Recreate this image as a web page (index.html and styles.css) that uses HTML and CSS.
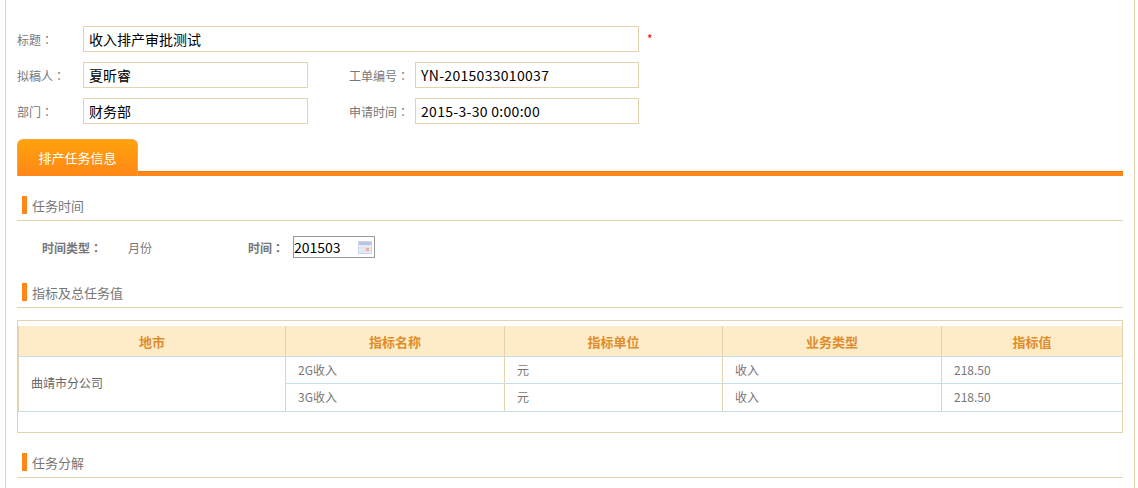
FILE: index.html
```html
<!DOCTYPE html>
<html lang="en">
<head>
    <meta charset="UTF-8">
    <title>收入排产审批测试</title>
    <link rel="stylesheet" href="styles.css">
</head>
<body>

<div class="page">
    <div class="form-row">
        <label class="form-label">标题<span class="colon">：</span></label>
        <div class="form-input wide">收入排产审批测试</div>
        <span class="required">*</span>
    </div>
    <div class="form-row">
        <label class="form-label">拟稿人<span class="colon">：</span></label>
        <div class="form-input">夏昕睿</div>
        <label class="form-label second">工单编号<span class="colon">：</span></label>
        <div class="form-input latin">YN-2015033010037</div>
    </div>
    <div class="form-row">
        <label class="form-label">部门<span class="colon">：</span></label>
        <div class="form-input">财务部</div>
        <label class="form-label second">申请时间<span class="colon">：</span></label>
        <div class="form-input latin">2015-3-30 0:00:00</div>
    </div>

    <div class="tab-bar">
        <div class="tab">排产任务信息</div>
    </div>

    <div class="section-title"><i></i>任务时间</div>
    <div class="time-row">
        <b class="time-type-label">时间类型<span class="colon">：</span></b>
        <span class="time-type-value">月份</span>
        <b class="time-label">时间<span class="colon">：</span></b>
        <div class="date-input">
            201503
            <svg class="cal-icon" width="14" height="13" viewBox="0 0 14 13">
                <rect x="0.5" y="0.5" width="13" height="12" fill="#eef1f9" stroke="#ccd5e8"/>
                <rect x="1" y="1" width="12" height="3" fill="#b7c4e2"/>
                <path d="M1 7h12M1 10h12M4 4v8M7 4v8M10 4v8" stroke="#d6ddec" fill="none"/>
                <rect x="8" y="7" width="3" height="3" fill="#f2ad9c"/>
            </svg>
        </div>
    </div>

    <div class="section-title"><i></i>指标及总任务值</div>
    <div class="table-box">
        <table class="data-table">
            <colgroup>
                <col class="col-city">
                <col class="col-name">
                <col class="col-unit">
                <col class="col-type">
                <col>
            </colgroup>
            <thead>
                <tr>
                    <th>地市</th>
                    <th>指标名称</th>
                    <th>指标单位</th>
                    <th>业务类型</th>
                    <th>指标值</th>
                </tr>
            </thead>
            <tbody>
                <tr class="row-a">
                    <td class="city" rowspan="2">曲靖市分公司</td>
                    <td>2G收入</td>
                    <td>元</td>
                    <td>收入</td>
                    <td>218.50</td>
                </tr>
                <tr class="row-b">
                    <td>3G收入</td>
                    <td>元</td>
                    <td>收入</td>
                    <td>218.50</td>
                </tr>
            </tbody>
        </table>
    </div>

    <div class="section-title"><i></i>任务分解</div>
</div>

</body>
</html>
```

FILE: styles.css
```css
html, body {
    margin: 0;
    padding: 0;
    background: #fff;
}
body {
    font-family: "Noto Sans CJK SC", "Noto Sans", sans-serif;
    font-size: 12px;
    color: #777;
    overflow: hidden;
}
.page {
    box-sizing: border-box;
    width: 1130px;
    height: 488px;
    margin-left: 5px;
    padding: 26px 11px 0 11px;
    border-left: 1px solid #e5d3b0;
    border-right: 1px solid #e5d3b0;
    overflow: hidden;
}
.colon {
    font-family: "Noto Sans CJK TC", sans-serif;
}
.form-row {
    display: flex;
    align-items: center;
    height: 26px;
    margin-bottom: 10px;
}
.form-label {
    width: 66px;
    white-space: nowrap;
}
.form-label.second {
    margin-left: 41px;
}
.form-input {
    box-sizing: border-box;
    width: 225px;
    height: 26px;
    line-height: 24px;
    padding-left: 5px;
    border: 1px solid #e5d3b0;
    font-size: 14px;
    color: #000;
}
.form-input.wide {
    width: 556px;
}
.form-input.latin {
    width: 224px;
    letter-spacing: 0.3px;
}
.required {
    margin: -2px 0 0 8px;
    color: #f00;
}
.tab-bar {
    height: 33px;
    margin-top: 15px;
    border-bottom: 4px solid #ff8717;
    box-shadow: inset 0 -1px 0 #ee7d14;
}
.tab {
    box-sizing: border-box;
    width: 121px;
    height: 37px;
    line-height: 35px;
    text-align: center;
    font-size: 13px;
    color: #fff;
    border: 1px solid #f5a54a;
    border-bottom: 0;
    border-radius: 6px 6px 0 0;
    background: linear-gradient(#ffa30c, #ff8717);
}
.section-title {
    display: flex;
    align-items: center;
    height: 18px;
    margin-top: 20px;
    padding-bottom: 6px;
    border-bottom: 1px solid #e5d3b0;
    font-size: 13px;
}
.section-title i {
    width: 5px;
    height: 18px;
    margin: 0 5px;
    background: #ff8717;
}
.time-row {
    display: flex;
    align-items: center;
    height: 22px;
    margin-top: 15px;
    margin-bottom: 25px;
}
.time-type-label {
    width: 86px;
    margin-left: 25px;
    white-space: nowrap;
}
.time-type-value {
    width: 120px;
}
.time-label {
    width: 45px;
    white-space: nowrap;
}
.date-input {
    box-sizing: border-box;
    display: flex;
    align-items: center;
    justify-content: space-between;
    width: 82px;
    height: 22px;
    padding: 0 2px 0 0;
    border: 1px solid #999;
    font-size: 14px;
    color: #000;
}
.cal-icon {
    display: block;
}
.table-box {
    box-sizing: border-box;
    height: 113px;
    margin-top: 12px;
    padding-top: 5px;
    border: 1px solid #e5d3b0;
}
.data-table {
    width: 100%;
    table-layout: fixed;
    border-collapse: collapse;
}
.col-city { width: 267px; }
.col-name { width: 219px; }
.col-unit { width: 218px; }
.col-type { width: 219px; }
.data-table th {
    height: 30px;
    padding: 0;
    background: #feecc8;
    border-left: 1px solid #e5d3b0;
    font-size: 13px;
    color: #e08c2c;
}
.data-table td {
    box-sizing: border-box;
    padding: 0 0 2px 12px;
    border-left: 1px solid #e5d3b0;
    border-top: 1px solid #c5e0ec;
    border-bottom: 1px solid #c5e0ec;
}
.row-a td {
    height: 27px;
}
.row-b td {
    height: 28px;
}
.data-table .city {
    padding-bottom: 4px;
    color: #666;
}
```
